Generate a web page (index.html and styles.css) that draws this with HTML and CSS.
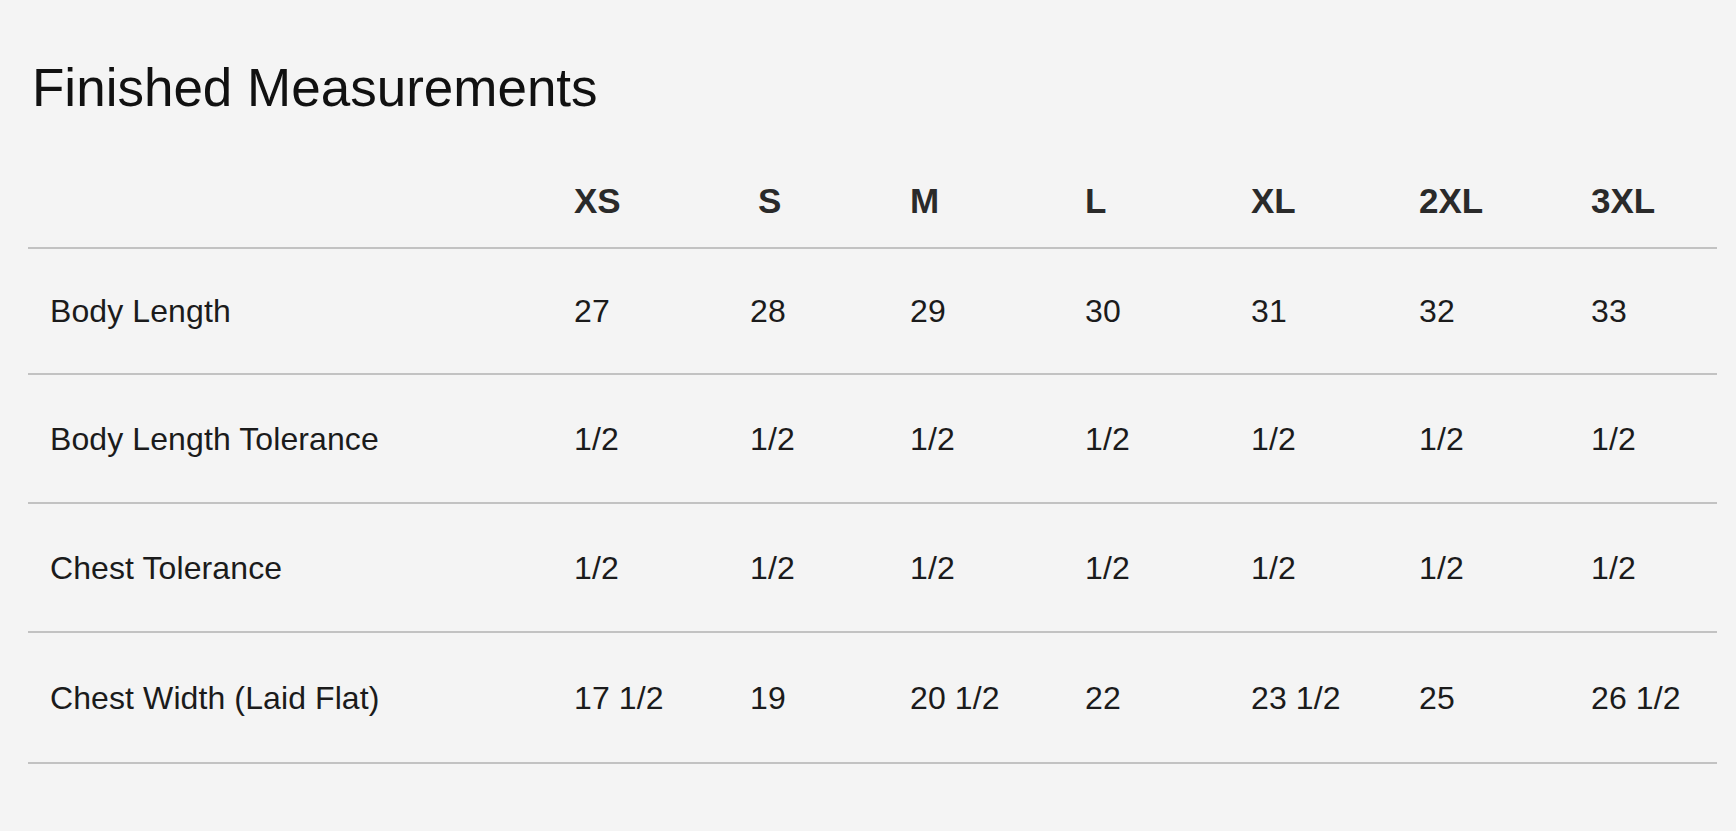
FILE: index.html
```html
<!DOCTYPE html>
<html lang="en">
<head>
<meta charset="utf-8">
<title>Finished Measurements</title>
<link rel="stylesheet" href="styles.css">
</head>
<body>
<main class="page">
  <h1 class="title">Finished Measurements</h1>
  <div class="chart">
    <div class="row head">
      <div class="cell label"></div>
      <div class="cell">XS</div>
      <div class="cell size-s">S</div>
      <div class="cell">M</div>
      <div class="cell">L</div>
      <div class="cell">XL</div>
      <div class="cell">2XL</div>
      <div class="cell">3XL</div>
    </div>
    <div class="row">
      <div class="cell label">Body Length</div>
      <div class="cell">27</div>
      <div class="cell">28</div>
      <div class="cell">29</div>
      <div class="cell">30</div>
      <div class="cell">31</div>
      <div class="cell">32</div>
      <div class="cell">33</div>
    </div>
    <div class="row">
      <div class="cell label">Body Length Tolerance</div>
      <div class="cell">1/2</div>
      <div class="cell">1/2</div>
      <div class="cell">1/2</div>
      <div class="cell">1/2</div>
      <div class="cell">1/2</div>
      <div class="cell">1/2</div>
      <div class="cell">1/2</div>
    </div>
    <div class="row">
      <div class="cell label">Chest Tolerance</div>
      <div class="cell">1/2</div>
      <div class="cell">1/2</div>
      <div class="cell">1/2</div>
      <div class="cell">1/2</div>
      <div class="cell">1/2</div>
      <div class="cell">1/2</div>
      <div class="cell">1/2</div>
    </div>
    <div class="row">
      <div class="cell label">Chest Width (Laid Flat)</div>
      <div class="cell">17 1/2</div>
      <div class="cell">19</div>
      <div class="cell">20 1/2</div>
      <div class="cell">22</div>
      <div class="cell">23 1/2</div>
      <div class="cell">25</div>
      <div class="cell">26 1/2</div>
    </div>
  </div>
</main>
</body>
</html>
```

FILE: styles.css
```css
html, body {
  margin: 0;
  padding: 0;
  background: #f4f4f4;
}

body {
  font-family: "Liberation Sans", Arial, Helvetica, sans-serif;
  color: #1b1b1b;
}

.page {
  padding: 0 19px 0 28px;
}

.title {
  margin: 58px 0 0 0;
  padding-left: 4px;
  font-size: 53px;
  line-height: 60px;
  font-weight: 400;
  color: #111111;
}

.chart {
  display: flex;
  flex-direction: column;
}

.row {
  display: grid;
  grid-template-columns: 546px 176px 160px 175px 166px 168px 172px 1fr;
  align-items: center;
  height: 127px;
  border-bottom: 2px solid #c2c2c2;
  font-size: 32px;
  line-height: 36px;
  letter-spacing: 0.1px;
}

.row:nth-child(2) {
  height: 124px;
}

.row:last-child {
  height: 129px;
}

.row.head {
  height: auto;
  align-items: start;
  padding: 63px 0 26px 0;
  font-size: 35px;
  line-height: 40px;
  font-weight: 700;
  color: #2a2a2a;
  letter-spacing: 0;
}

.cell {
  white-space: nowrap;
}

.cell.label {
  padding-left: 22px;
}

.cell.size-s {
  padding-left: 8px;
}
```
